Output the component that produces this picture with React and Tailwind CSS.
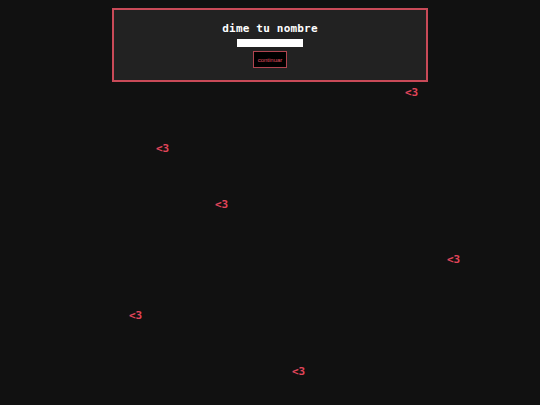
import React from "react";

const hearts = [
  { left: 405, top: 87 },
  { left: 156, top: 143 },
  { left: 215, top: 199 },
  { left: 447, top: 254 },
  { left: 129, top: 310 },
  { left: 292, top: 366 },
];

export default function App() {
  return (
    <div className="relative w-[540px] h-[405px] bg-[#111111] overflow-hidden font-['DejaVu_Sans_Mono',monospace]">
      <div className="flex justify-center pt-[8px]">
        <div className="w-[316px] h-[74px] border-2 border-[#c94a58] bg-[#222222] flex flex-col items-center pt-[13px]">
          <div className="text-[11px] leading-[12px] font-bold text-white tracking-[0.2px]">dime tu nombre</div>
          <input
            className="mt-[4px] w-[66px] h-[8px] bg-white border-0 outline-none"
            type="text"
          />
          <button className="mt-[4px] w-[34px] h-[17px] bg-black border border-[#b04450] text-[#e05062] text-[6px] leading-[6px] font-['Liberation_Sans',sans-serif] flex items-center justify-center">
            continuar
          </button>
        </div>
      </div>
      {hearts.map((h, i) => (
        <div
          key={i}
          className="absolute text-[11px] leading-[12px] font-bold text-[#e0455a]"
          style={{ left: h.left, top: h.top }}
        >
          &lt;3
        </div>
      ))}
    </div>
  );
}
